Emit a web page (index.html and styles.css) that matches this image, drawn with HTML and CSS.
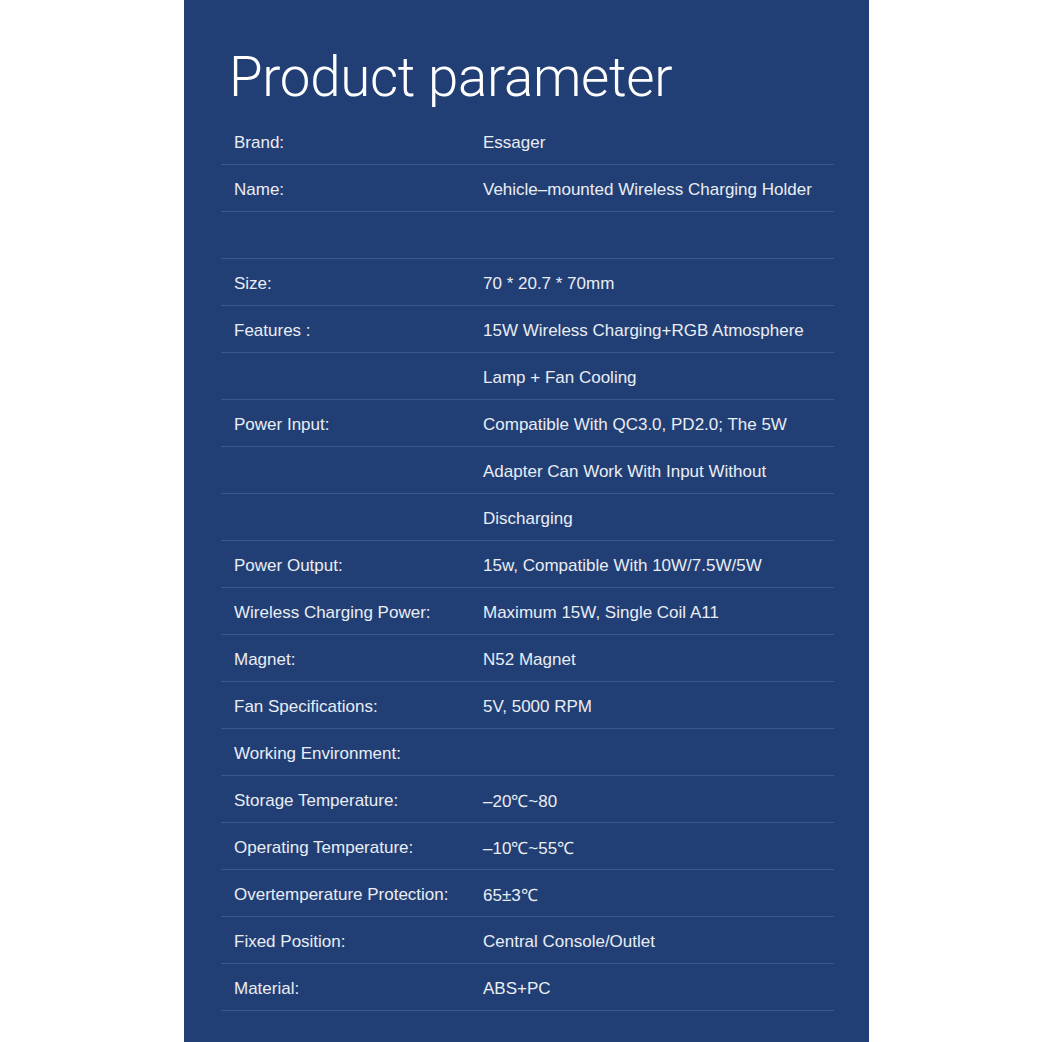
FILE: index.html
```html
<!DOCTYPE html>
<html lang="en">
<head>
    <meta charset="UTF-8">
    <title>Product parameter</title>
    <link rel="stylesheet" href="styles.css">
</head>
<body>
    <div class="panel">
        <h1 class="title">Product parameter</h1>
        <div class="params">
            <div class="row"><span class="label">Brand:</span><span class="value">Essager</span></div>
            <div class="row"><span class="label">Name:</span><span class="value">Vehicle–mounted Wireless Charging Holder</span></div>
            <div class="row"><span class="label"></span><span class="value"></span></div>
            <div class="row"><span class="label">Size:</span><span class="value">70 * 20.7 * 70mm</span></div>
            <div class="row"><span class="label">Features :</span><span class="value">15W Wireless Charging+RGB Atmosphere</span></div>
            <div class="row"><span class="label"></span><span class="value">Lamp + Fan Cooling</span></div>
            <div class="row"><span class="label">Power Input:</span><span class="value">Compatible With QC3.0, PD2.0; The 5W</span></div>
            <div class="row"><span class="label"></span><span class="value">Adapter Can Work With Input Without</span></div>
            <div class="row"><span class="label"></span><span class="value">Discharging</span></div>
            <div class="row"><span class="label">Power Output:</span><span class="value">15w, Compatible With 10W/7.5W/5W</span></div>
            <div class="row"><span class="label">Wireless Charging Power:</span><span class="value">Maximum 15W, Single Coil A11</span></div>
            <div class="row"><span class="label">Magnet:</span><span class="value">N52 Magnet</span></div>
            <div class="row"><span class="label">Fan Specifications:</span><span class="value">5V, 5000 RPM</span></div>
            <div class="row"><span class="label">Working Environment:</span><span class="value"></span></div>
            <div class="row"><span class="label">Storage Temperature:</span><span class="value">–20℃~80</span></div>
            <div class="row"><span class="label">Operating Temperature:</span><span class="value">–10℃~55℃</span></div>
            <div class="row"><span class="label">Overtemperature Protection:</span><span class="value">65±3℃</span></div>
            <div class="row"><span class="label">Fixed Position:</span><span class="value">Central Console/Outlet</span></div>
            <div class="row"><span class="label">Material:</span><span class="value">ABS+PC</span></div>
        </div>
    </div>
</body>
</html>
```

FILE: styles.css
```css
:root {
    --panel: #223f75;
    --line: #3a5890;
    --text: #e9edf4;
}
html, body {
    margin: 0;
    padding: 0;
    height: 100%;
}
body {
    background: #fff;
    font-family: 'Liberation Sans', Arial, sans-serif;
}
.panel {
    margin-left: 184px;
    width: 685px;
    min-height: 1042px;
    background: var(--panel);
    padding: 0 35px 0 37px;
    box-sizing: border-box;
    overflow: hidden;
}
.title {
    margin: 47px 0 0 8px;
    height: 71px;
    font-family: Roboto, 'Liberation Sans', sans-serif;
    font-weight: 300;
    font-size: 54.6px;
    line-height: 60px;
    color: #fff;
    letter-spacing: -0.3px;
}
.params {
    display: flex;
    flex-direction: column;
}
.row {
    display: flex;
    align-items: center;
    height: 47px;
    box-sizing: border-box;
    border-bottom: 1.5px solid var(--line);
    color: var(--text);
    font-size: 17px;
    padding-top: 3px;
}
.label {
    width: 262px;
    padding-left: 13px;
    box-sizing: border-box;
    flex-shrink: 0;
}
.value {
    flex: 1;
}
```
